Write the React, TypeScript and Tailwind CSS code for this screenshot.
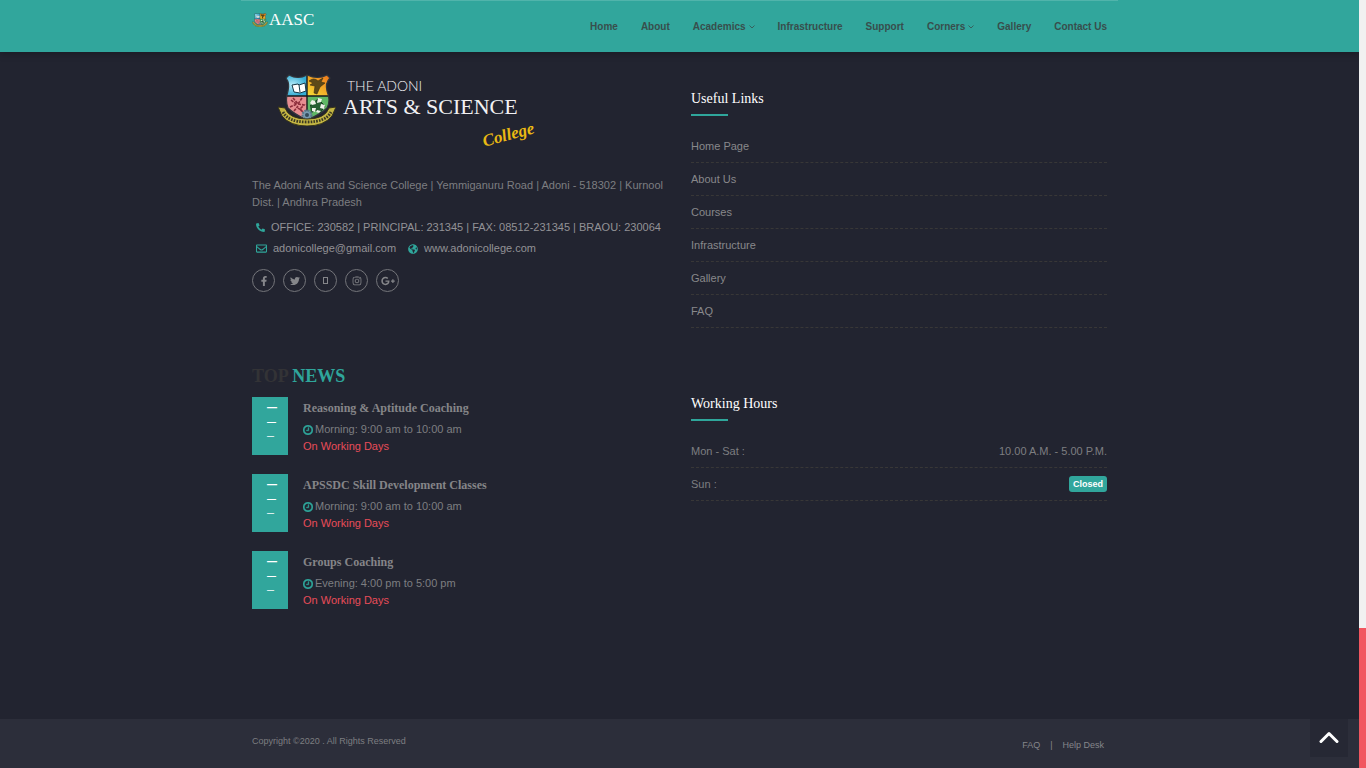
import type { ReactNode } from "react";
import {
  FaFacebookF,
  FaGlobeAmericas,
  FaGooglePlusG,
  FaInstagram,
  FaPhoneAlt,
  FaRegEnvelope,
  FaTwitter,
} from "react-icons/fa";

const navItems = [
  { label: "Home" },
  { label: "About" },
  { label: "Academics", menu: true },
  { label: "Infrastructure" },
  { label: "Support" },
  { label: "Corners", menu: true },
  { label: "Gallery" },
  { label: "Contact Us" },
];

const usefulLinks = ["Home Page", "About Us", "Courses", "Infrastructure", "Gallery", "FAQ"];

const news = [
  { title: "Reasoning & Aptitude Coaching", time: "Morning: 9:00 am to 10:00 am" },
  { title: "APSSDC Skill Development Classes", time: "Morning: 9:00 am to 10:00 am" },
  { title: "Groups Coaching", time: "Evening: 4:00 pm to 5:00 pm" },
];

function Crest({ className }: { className: string }) {
  return (
    <svg viewBox="0 0 58 52" className={className} aria-hidden="true">
      <defs>
        <radialGradient id="sky">
          <stop offset="0" stopColor="#b5ecfa" />
          <stop offset="1" stopColor="#35acd4" />
        </radialGradient>
        <linearGradient id="sun" x1="0" y1="1" x2="1" y2="0">
          <stop offset="0" stopColor="#f5df36" />
          <stop offset="1" stopColor="#ed6416" />
        </linearGradient>
        <clipPath id="shield">
          <path d="M11 1Q20 6 29 1Q40 6 49 1L52 4Q47 9 49 17Q53 27 49 34Q43 40 29 46Q16 40 10 34Q7 26 10 17Q12 9 8 4Z" />
        </clipPath>
      </defs>
      <g clipPath="url(#shield)">
        <path fill="url(#sky)" d="M0 0h29v22H0z" />
        <path fill="url(#sun)" d="M29 0h29v22H29z" />
        <path fill="#e78e91" d="M0 22h29v30H0z" />
        <path fill="#5fb765" d="M29 22h29v30H29z" />
        <path d="M29 0v48M5 22h48" stroke="#17191d" strokeWidth="1.4" />
      </g>
      <path
        d="M11 1Q20 6 29 1Q40 6 49 1L52 4Q47 9 49 17Q53 27 49 34Q43 40 29 46Q16 40 10 34Q7 26 10 17Q12 9 8 4Z"
        fill="none"
        stroke="#33363b"
        strokeWidth="1.2"
      />
      <path d="M14 11l6-1 1 1 6-2 1 8-6 2-6-1z" fill="#fff" stroke="#153848" strokeWidth="1" />
      <path d="M21 11l1 7" stroke="#153848" />
      <path
        d="M31 7q5-4 9 0l5-3-2 4 4 1-5 4-3 7-3-1 1-7-5-1 3-2z"
        fill="#5d4918"
        stroke="#3a2e12"
        strokeWidth=".6"
      />
      <path
        d="M13 26l5 4m-6 3l7-3m-3 7l4-5m-5-8l5 6 4-6m-4 6l6 1-4 4 3 3-5-4"
        fill="none"
        stroke="#8b2c3a"
        strokeWidth="1.6"
        strokeDasharray="3 1"
      />
      <path d="M32 32l8-7 7 7-5 7-5-3-4 3" fill="#265f32" stroke="#183921" />
      <g fill="#eef2e8">
        <path d="M34 26l3 1 1 3-4 1-2-2z" />
        <path d="M40 24l4 1-1 3-4 1z" />
        <path d="M43 30l4 1-1 4-4-1z" />
        <path d="M34 34l4 0-1 4-3-1z" />
        <path d="M39 36l4 1-2 2-3-1z" />
      </g>
      <circle cx="29" cy="41" r="4.5" fill="#789bb1" stroke="#597889" strokeWidth="2" strokeDasharray="2 1" />
      <circle cx="29" cy="41" r="2" fill="#334a59" />
      <path
        d="M0 33l7 1q4 11 22 11t22-11l7-1-4 9q-8 10-25 10T4 42z"
        fill="#c3b543"
        stroke="#38351a"
        strokeWidth="1"
      />
      <path d="M5 38q5 10 24 10t24-10" fill="none" stroke="#3b3922" strokeWidth="2.8" strokeDasharray="1.6 1.2" />
    </svg>
  );
}

function ClockIcon() {
  return (
    <svg
      viewBox="0 128 1536 1536"
      className="size-[10px] shrink-0 fill-[#2fa69b] stroke-[#2fa69b]"
      strokeWidth="60"
      aria-hidden="true"
    >
      <path d="M896 544v448q0 14-9 23t-23 9h-320q-14 0-23-9t-9-23v-64q0-14 9-23t23-9h224v-352q0-14 9-23t23-9h64q14 0 23 9t9 23zm416 352q0-148-73-273t-198-198-273-73-273 73-198 198-73 273 73 273 198 198 273 73 273-73 198-198 73-273zm224 0q0 209-103 385.5t-279.5 279.5-385.5 103-385.5-103-279.5-279.5-103-385.5 103-385.5 279.5-279.5 385.5-103 385.5 103 279.5 279.5 103 385.5z" />
    </svg>
  );
}

function Header() {
  return (
    <header className="relative h-[52px] bg-[#31a69c] shadow-[0_1px_8px_rgba(0,0,0,0.3)]">
      <div className="mx-auto flex h-full max-w-[877px] justify-between border-t border-[#50b4ab] px-[11px]">
        <a href="#home" className="flex h-[38px] items-center gap-px font-['Liberation_Serif',serif] text-[17px] text-white">
          <Crest className="h-[14px] w-4" />
          AASC
        </a>
        <nav className="flex h-[51px] items-center gap-[23px] text-[10px] font-bold text-[#384e4c]">
          {navItems.map((item) => (
            <a key={item.label} href="#menu" className="flex items-center gap-[3px]">
              {item.label}
              {item.menu && (
                <svg viewBox="0 0 6 4" className="h-1 w-1.5" fill="none" stroke="currentColor" aria-hidden="true">
                  <path d="M.5.5L3 3L5.5.5" strokeWidth=".8" />
                </svg>
              )}
            </a>
          ))}
        </nav>
      </div>
    </header>
  );
}

function Brand() {
  return (
    <a href="#home" className="ml-[26px] flex h-[82px] items-start gap-[7px] pt-0.5 text-[#f1f1f3]">
      <Crest className="h-[52px] w-[58px]" />
      <span className="flex flex-col items-start">
        <span className="mt-1 ml-1 font-[Lato,sans-serif] text-[14px] leading-4 font-light">THE ADONI</span>
        <span className="font-['Liberation_Serif',serif] text-[22px] leading-[26px]">ARTS &amp; SCIENCE</span>
        <span className="ml-[139px] -rotate-[15deg] font-['Liberation_Serif',serif] text-[17px] leading-[30px] font-bold text-[#e9b913] italic">
          College
        </span>
      </span>
    </a>
  );
}

function SocialLink({ label, children }: { label: string; children: ReactNode }) {
  return (
    <a
      href="#social"
      aria-label={label}
      className="flex size-[23px] items-center justify-center rounded-full border border-[#74757a] text-[10px] text-[#85868a]"
    >
      {children}
    </a>
  );
}

function Contact() {
  return (
    <section>
      <Brand />
      <p className="mt-[23px] leading-[17px]">
        The Adoni Arts and Science College | Yemmiganuru Road | Adoni - 518302 | Kurnool Dist. | Andhra Pradesh
      </p>
      <div className="mt-[6px] ml-1 text-[#929296]">
        <p className="flex items-center gap-[6px] leading-[21px] whitespace-nowrap">
          <FaPhoneAlt className="size-[9px] shrink-0 text-[#2fa69b]" />
          OFFICE: 230582 | PRINCIPAL: 231345 | FAX: 08512-231345 | BRAOU: 230064
        </p>
        <p className="flex items-center gap-[6px] leading-[21px]">
          <FaRegEnvelope className="size-[11px] text-[#2fa69b]" />
          <a href="mailto:adonicollege@gmail.com">adonicollege@gmail.com</a>
          <FaGlobeAmericas className="ml-[6px] size-[10px] text-[#2fa69b]" />
          <a href="#website">www.adonicollege.com</a>
        </p>
      </div>
      <div className="mt-[10px] flex gap-2">
        <SocialLink label="Facebook"><FaFacebookF /></SocialLink>
        <SocialLink label="Twitter"><FaTwitter /></SocialLink>
        <SocialLink label="Feed"><span className="h-[7px] w-[5px] border border-current" /></SocialLink>
        <SocialLink label="Instagram"><FaInstagram /></SocialLink>
        <SocialLink label="Google Plus"><FaGooglePlusG className="size-[14px]" /></SocialLink>
      </div>
    </section>
  );
}

function PanelTitle({ children }: { children: ReactNode }) {
  return (
    <h2 className="flex flex-col gap-[5px] font-['Liberation_Serif',serif] text-[14px] leading-5 text-white after:h-0.5 after:w-[37px] after:bg-[#2fa69b]">
      {children}
    </h2>
  );
}

function TopNews() {
  return (
    <section>
      <h2 className="font-['Liberation_Serif',serif] text-[18px] leading-5 font-bold text-[#2fa69b]">
        <span className="text-[#333336]">TOP</span> NEWS
      </h2>
      <div className="mt-[11px] flex flex-col gap-[19px]">
        {news.map((item) => (
          <article key={item.title} className="flex h-[58px] gap-[15px]">
            <div className="flex w-9 shrink-0 flex-col bg-[#31a69c] pt-1 pl-[15px] font-bold text-white">
              <span className="text-[10px] leading-[14px]">—</span>
              <span className="text-[9px] leading-[14px]">—</span>
              <span className="text-[7px] leading-[14px]">—</span>
            </div>
            <div>
              <h3 className="font-['Liberation_Serif',serif] text-[12px] leading-[22px] font-bold text-[#858588]">
                {item.title}
              </h3>
              <p className="mt-0.5 flex items-center gap-0.5 leading-[17px]">
                <ClockIcon />
                {item.time}
              </p>
              <p className="leading-[17px] text-[#e84c59]">On Working Days</p>
            </div>
          </article>
        ))}
      </div>
    </section>
  );
}

export default function App() {
  return (
    <div className="flex min-h-screen bg-[#222430] font-['Liberation_Sans',Arial,sans-serif] text-[11px] text-[#7d7e81]">
      <div className="flex min-w-0 flex-1 flex-col">
        <Header />
        <main className="mx-auto grid w-full max-w-[855px] flex-1 grid-cols-2 grid-rows-[294px_1fr] gap-x-[23px] pt-5">
          <Contact />
          <section className="pt-[17px]">
            <PanelTitle>Useful Links</PanelTitle>
            <ul className="mt-[14px]">
              {usefulLinks.map((link) => (
                <li key={link} className="border-b border-dashed border-[#383737] leading-8 text-[#88888b]">
                  <a href="#links">{link}</a>
                </li>
              ))}
            </ul>
          </section>
          <TopNews />
          <section className="pt-7">
            <PanelTitle>Working Hours</PanelTitle>
            <ul className="mt-[14px]">
              <li className="flex justify-between border-b border-dashed border-[#383737] leading-8">
                <span>Mon - Sat :</span>
                <span>10.00 A.M. - 5.00 P.M.</span>
              </li>
              <li className="flex items-center justify-between border-b border-dashed border-[#383737] leading-8">
                <span>Sun :</span>
                <span className="rounded-[3px] bg-[#31a69c] px-1 text-[9px] leading-4 font-bold text-white">Closed</span>
              </li>
            </ul>
          </section>
        </main>
        <footer className="relative h-[49px] bg-[#2c2e3a] text-[9px]">
          <div className="mx-auto flex max-w-[855px] justify-between">
            <p className="pt-4 leading-3">Copyright ©2020 . All Rights Reserved</p>
            <div className="flex gap-[10px] pt-5 pr-[3px] leading-3 text-[#85868a]">
              <a href="#faq">FAQ</a>
              <span>|</span>
              <a href="#help">Help Desk</a>
            </div>
          </div>
          <button
            type="button"
            aria-label="Back to top"
            className="absolute top-0 right-[11px] flex size-[38px] items-center justify-center bg-[#262834]"
          >
            <svg viewBox="0 0 20 14" className="h-[14px] w-5" fill="none" stroke="white" strokeWidth="3" aria-hidden="true">
              <path strokeLinecap="round" strokeLinejoin="round" d="M2 10.5L10 2.5L18 10.5" />
            </svg>
          </button>
        </footer>
      </div>
      <div className="relative z-10 flex w-[7px] shrink-0 flex-col justify-end bg-[#f1f1f1]">
        <div className="h-[140px] bg-[#f1565f]" />
      </div>
    </div>
  );
}
